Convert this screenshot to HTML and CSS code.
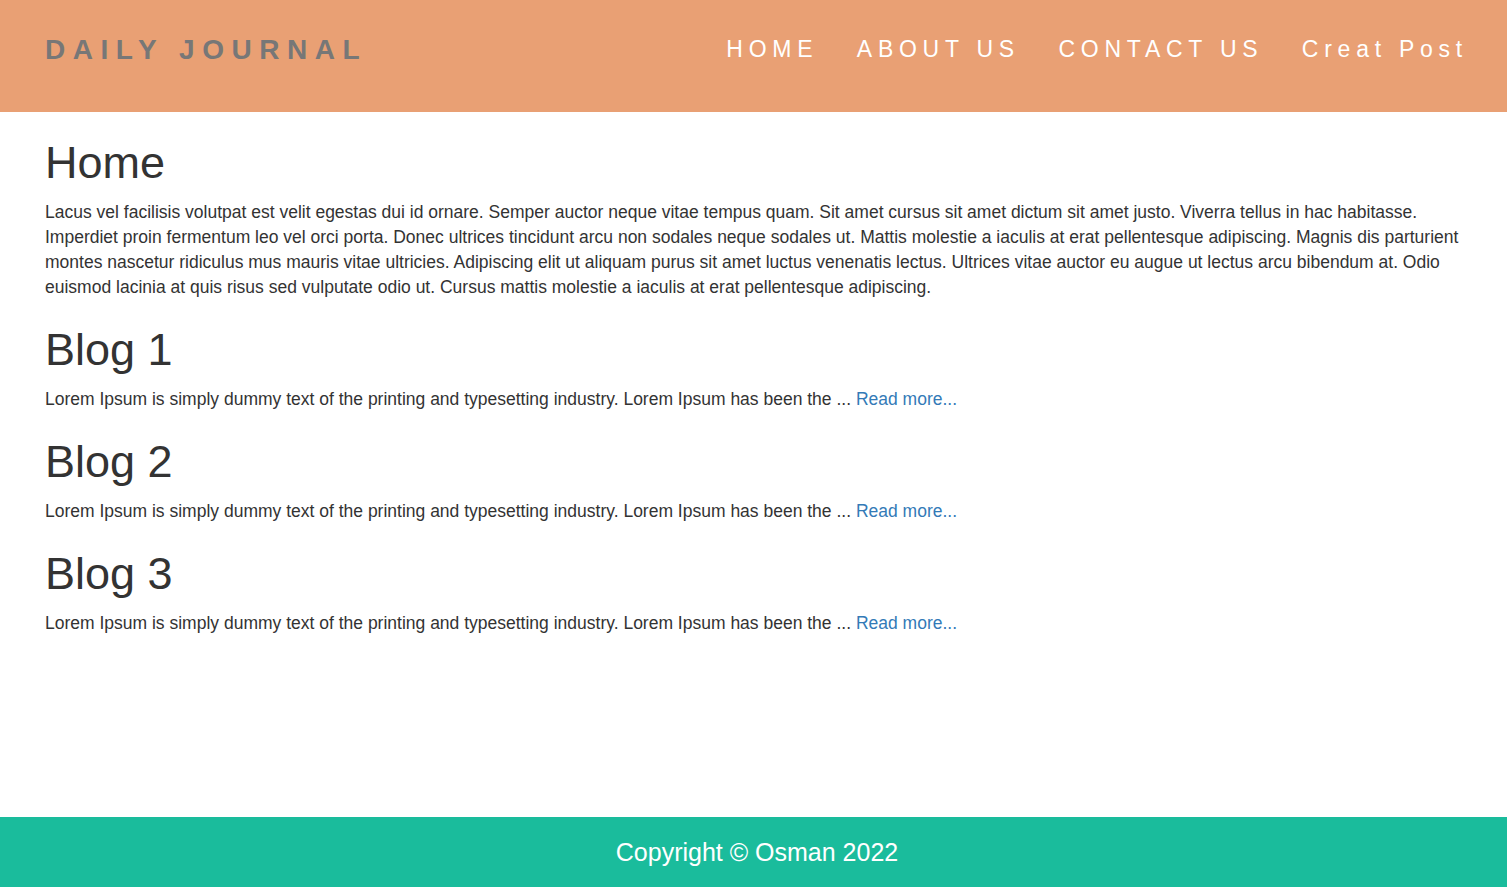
FILE: index.html
```html
<!DOCTYPE html>
<html lang="en">
<head>
<meta charset="utf-8">
<title>Daily Journal</title>
<link rel="stylesheet" href="styles.css">
</head>
<body>
<header class="site-header">
  <a class="brand" href="#">DAILY JOURNAL</a>
  <nav class="nav-links">
    <a href="#">HOME</a>
    <a href="#">ABOUT US</a>
    <a href="#">CONTACT US</a>
    <a href="#">Creat Post</a>
  </nav>
</header>
<main class="content">
  <h1>Home</h1>
  <p>Lacus vel facilisis volutpat est velit egestas dui id ornare. Semper auctor neque vitae tempus quam. Sit amet cursus sit amet dictum sit amet justo. Viverra tellus in hac habitasse. Imperdiet proin fermentum leo vel orci porta. Donec ultrices tincidunt arcu non sodales neque sodales ut. Mattis molestie a iaculis at erat pellentesque adipiscing. Magnis dis parturient montes nascetur ridiculus mus mauris vitae ultricies. Adipiscing elit ut aliquam purus sit amet luctus venenatis lectus. Ultrices vitae auctor eu augue ut lectus arcu bibendum at. Odio euismod lacinia at quis risus sed vulputate odio ut. Cursus mattis molestie a iaculis at erat pellentesque adipiscing.</p>

  <h1>Blog 1</h1>
  <p>Lorem Ipsum is simply dummy text of the printing and typesetting industry. Lorem Ipsum has been the ... <a href="#">Read more...</a></p>

  <h1>Blog 2</h1>
  <p>Lorem Ipsum is simply dummy text of the printing and typesetting industry. Lorem Ipsum has been the ... <a href="#">Read more...</a></p>

  <h1>Blog 3</h1>
  <p>Lorem Ipsum is simply dummy text of the printing and typesetting industry. Lorem Ipsum has been the ... <a href="#">Read more...</a></p>
</main>
<footer class="site-footer">
  <p>Copyright © Osman 2022</p>
</footer>
</body>
</html>
```

FILE: styles.css
```css
* { box-sizing: border-box; }

html, body {
  margin: 0;
  padding: 0;
}

body {
  min-height: 100vh;
  display: flex;
  flex-direction: column;
  font-family: "Liberation Sans", Arial, sans-serif;
  font-size: 17.5px;
  line-height: 25px;
  color: #333;
  background: #fff;
}

a { text-decoration: none; }

.site-header {
  height: 112px;
  background: #e9a074;
  display: flex;
  justify-content: space-between;
  align-items: flex-start;
  padding: 34px 39px 0 45px;
}

.brand {
  font-size: 28px;
  line-height: 32px;
  font-weight: bold;
  letter-spacing: 7.55px;
  color: #777;
}

.nav-links {
  display: flex;
  gap: 38.5px;
}

.nav-links a {
  font-size: 23px;
  line-height: 31px;
  letter-spacing: 5.75px;
  color: #fff;
}

.content {
  padding: 1px 45px 0;
}

.content h1 {
  font-size: 45px;
  font-weight: 500;
  line-height: 1.1;
  margin: 25px 0 12.5px;
  color: #333;
}

.content p {
  margin: 0 0 12.5px;
}

.content a {
  color: #337ab7;
}

.site-footer {
  margin-top: auto;
  height: 70px;
  background: #1abc9c;
  display: flex;
  align-items: center;
  justify-content: center;
  padding-left: 7px;
}

.site-footer p {
  margin: 0;
  color: #fff;
  font-size: 25px;
  line-height: 30px;
}
```
